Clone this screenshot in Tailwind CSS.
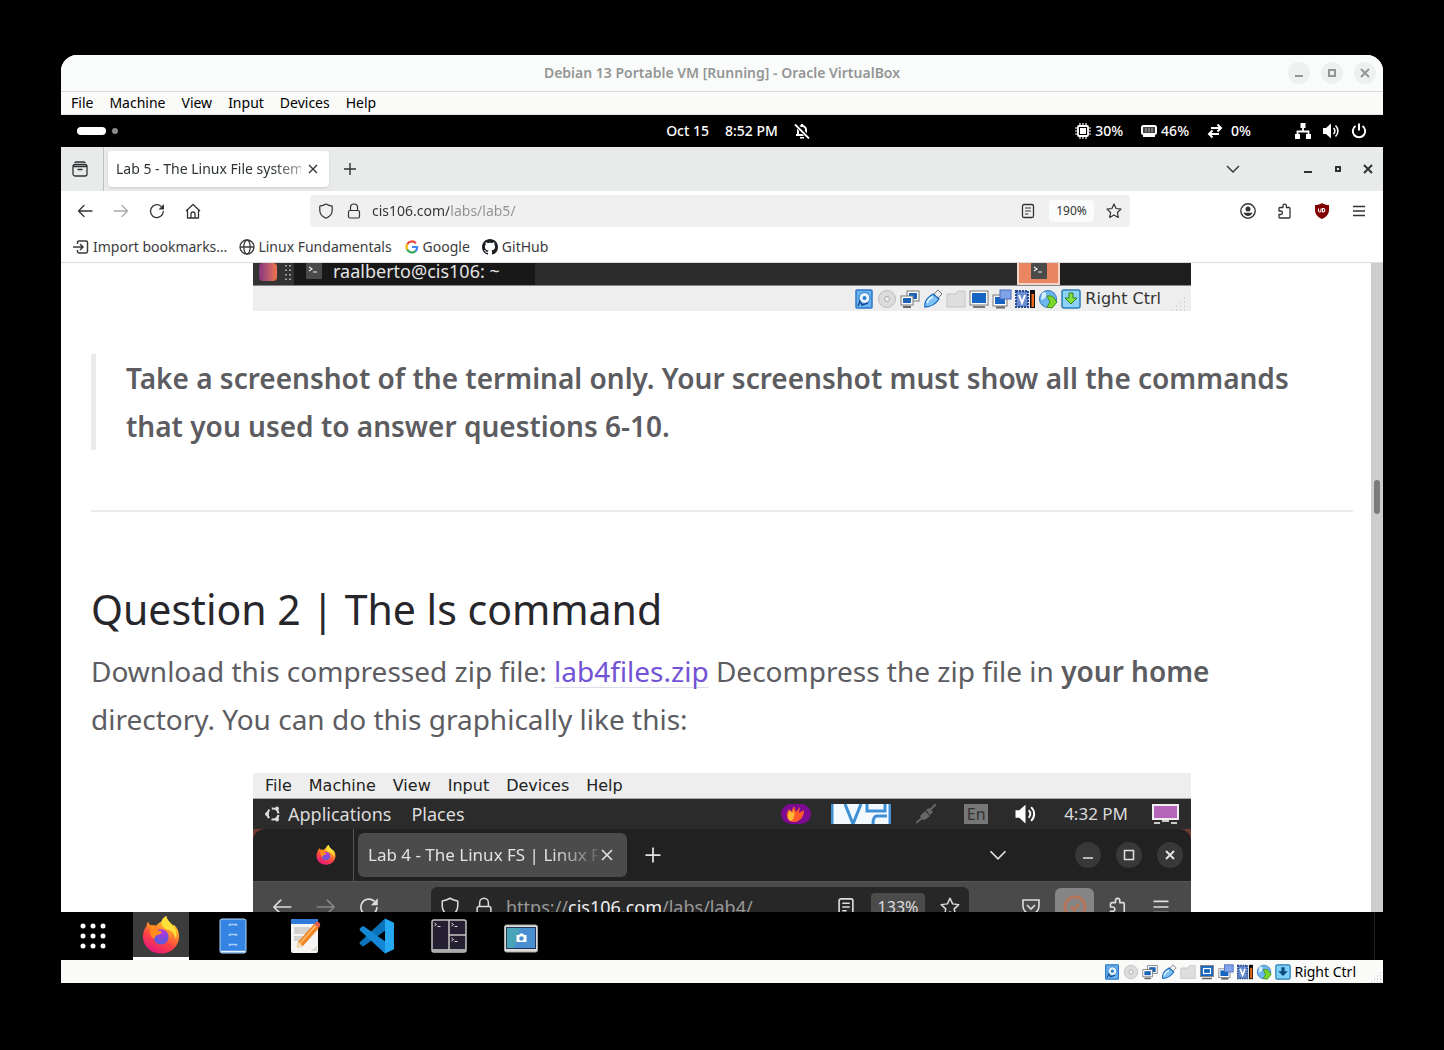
<!DOCTYPE html>
<html lang="en">
  <head>
    <meta charset="UTF-8" />
    <meta name="viewport" content="width=device-width, initial-scale=1.0" />
    <title>Debian 13 Portable VM [Running] - Oracle VirtualBox</title>
    <script src="https://cdn.jsdelivr.net/npm/@tailwindcss/browser@4"></script>
  </head>
  <body class="bg-black font-['Noto_Sans',sans-serif] text-sm">
    <!-- Shared icons -->
    <svg class="absolute size-0">
      <defs>
        <linearGradient id="ffBody" x1="0.8" y1="0" x2="0.3" y2="1">
          <stop offset="0" stop-color="#ffe847" />
          <stop offset="0.35" stop-color="#ff9a2b" />
          <stop offset="0.65" stop-color="#ff4343" />
          <stop offset="1" stop-color="#e3167f" />
        </linearGradient>
        <radialGradient id="ffGlobe" cx="0.6" cy="0.2" r="0.9">
          <stop offset="0" stop-color="#b833e1" />
          <stop offset="0.5" stop-color="#7a4ed8" />
          <stop offset="1" stop-color="#4a63e6" />
        </radialGradient>
      </defs>
      <symbol id="firefox" viewBox="0 0 40 40">
        <path d="M20 39.500C9 39.500 1 31.500 1 21.500c0-5 2-8.500 3.800-11 0-2 .7-3.500 1.700-4.500.5 2 1.500 3 3 3.800 2-.3 4-.1 5.500.4C16.500 8 18.500 6.500 20.500 6 21 3.500 23 1.500 25.500 0c1 5 4.500 7 7.500 10.500l.5-1.500c4 3.500 5.500 8 5.500 12.500C39 31.500 31 39.500 20 39.500z" fill="url(#ffBody)" />
        <path d="M25.500 0c1 5 4.500 7 7.500 10.500 3 3.500 4.500 8 2.500 13.500-1-5-4-8.500-8-9.500-4-1-7.500-4-7-8.500C21 3.500 23 1.500 25.500 0z" fill="#ffdf3a" />
        <circle cx="20" cy="22" r="8" fill="url(#ffGlobe)" />
        <path d="M5 10.500C8 9.500 12 9.500 15 10.200c-.5 2 0 4 2.500 5.300 1.500.7 3.500.5 3.500 1.500-.5 1.500-3 2.500-5 3-2 .7-3 2.500-3 4.500-4-3-5-7-4-10z" fill="#ff8a1e" />
      </symbol>
      <symbol id="hdd" viewBox="0 0 20 20">
        <rect x="2" y="1" width="16" height="18" rx="1" fill="#6cb4f0" stroke="#2b78c8" stroke-width="1.500" />
        <circle cx="10.500" cy="9" r="5.500" fill="#e9f5ff" stroke="#2474c4" />
        <circle cx="10.500" cy="9" r="2" fill="#2f7fd0" />
        <path d="M4 17l2-5 2 4 6-2" fill="none" stroke="#174f95" stroke-width="1.500" />
      </symbol>
      <symbol id="disc" viewBox="0 0 20 20">
        <circle cx="10" cy="10" r="8.500" fill="#dcdcdc" stroke="#bcbcbc" />
        <circle cx="10" cy="10" r="2.500" fill="#f3f3f3" stroke="#aaa" />
      </symbol>
      <symbol id="net" viewBox="0 0 20 20">
        <rect x="7" y="2" width="12" height="10" fill="#fff" stroke="#777" />
        <rect x="9" y="4" width="8" height="6" fill="#1c63b7" />
        <rect x="1" y="7" width="12" height="9" fill="#fff" stroke="#777" />
        <rect x="3" y="9" width="8" height="5" fill="#1c63b7" />
        <path d="M3 18h8" stroke="#666" stroke-width="2" />
      </symbol>
      <symbol id="usb" viewBox="0 0 20 20">
        <path d="M11 5l4-4 4 4-4 4z" fill="#eee" stroke="#777" />
        <path d="M2 18c-1-5 3-10 8-13l6 5c-4 6-9 8-14 8z" fill="#7cc2f5" stroke="#1d6dbd" stroke-width="1.300" />
        <path d="M4 14c1-3 3-5 6-6" fill="none" stroke="#d9f0ff" stroke-width="2" />
      </symbol>
      <symbol id="folder" viewBox="0 0 20 20">
        <path d="M1 18V5h9l2-3h7v16z" fill="#dedede" stroke="#c4c4c4" />
      </symbol>
      <symbol id="monitor" viewBox="0 0 20 20">
        <rect x="1" y="2" width="18" height="14" fill="#fff" stroke="#777" />
        <rect x="3" y="4" width="14" height="10" fill="#1765c2" />
        <path d="M4 18h12" stroke="#777" stroke-width="2" />
      </symbol>
      <symbol id="windows" viewBox="0 0 20 20">
        <rect x="1" y="6" width="14" height="11" fill="#fff" stroke="#777" />
        <rect x="3" y="8" width="10" height="7" fill="#1765c2" />
        <rect x="8" y="1" width="11" height="9" fill="#7fa4ea" stroke="#4e68b8" />
        <path d="M4 18.500h9" stroke="#666" stroke-width="2" />
      </symbol>
      <symbol id="cpuv" viewBox="0 0 20 20">
        <rect x="1" y="2" width="12" height="16" fill="#6b8ed0" stroke="#26488f" stroke-width="2" stroke-dasharray="2 1" />
        <path d="M4 6l3 8 3-8" fill="none" stroke="#fff" stroke-width="2" />
        <rect x="15" y="1" width="5" height="18" fill="#111" />
        <rect x="16.500" y="5" width="2.500" height="13" fill="#f26a1b" />
      </symbol>
      <symbol id="globe" viewBox="0 0 20 20">
        <circle cx="10" cy="10" r="8.500" fill="#6fb5ee" stroke="#2f7cc0" />
        <path d="M4 4c3-2 5 0 4 3s-3 3-5 4z" fill="#d6efff" />
        <path d="M9 7h5l5 6-5 6-5-1 3-5z" fill="#7cd62c" stroke="#3f8f17" />
      </symbol>
      <symbol id="down" viewBox="0 0 20 20">
        <rect x="1" y="1" width="18" height="18" rx="2" fill="#7fd0f7" stroke="#2b7db8" stroke-width="1.500" />
        <path d="M8 4h4v5h4l-6 6-6-6h4z" fill="#0d4a80" />
      </symbol>
      <symbol id="downGreen" viewBox="0 0 20 20">
        <rect x="1" y="1" width="18" height="18" rx="2" fill="#8fd2f8" stroke="#2b7db8" stroke-width="1.500" />
        <path d="M8 4h4v5h4l-6 6-6-6h4z" fill="#86e03a" stroke="#2f7f22" />
      </symbol>
      <symbol id="shield" viewBox="0 0 16 16">
        <path d="M8 1c2 1.200 4 1.900 6.200 2.200v4C14.200 11 11.500 13.800 8 15.200 4.500 13.800 1.800 11 1.800 7.200v-4C4 2.900 6 2.200 8 1z" fill="none" stroke="currentColor" stroke-width="1.200" stroke-linejoin="round" />
      </symbol>
      <symbol id="lock" viewBox="0 0 16 16">
        <rect x="2.500" y="7.500" width="11" height="7.500" rx="1.500" fill="none" stroke="currentColor" stroke-width="1.200" />
        <path d="M4.500 7.500V4.500a3.500 3.500 0 0 1 7 0v3" fill="none" stroke="currentColor" stroke-width="1.200" />
      </symbol>
      <symbol id="back" viewBox="0 0 16 16">
        <path d="M15 8H1.500M7 2.500L1.500 8 7 13.500" fill="none" stroke="currentColor" stroke-width="1.300" stroke-linecap="round" stroke-linejoin="round" />
      </symbol>
      <symbol id="forward" viewBox="0 0 16 16">
        <path d="M1 8h13.500M9 2.500L14.500 8 9 13.500" fill="none" stroke="currentColor" stroke-width="1.300" stroke-linecap="round" stroke-linejoin="round" />
      </symbol>
      <symbol id="reload" viewBox="0 0 16 16">
        <path d="M14.300 8.500A6.400 6.400 0 1 1 12 3.200" fill="none" stroke="currentColor" stroke-width="1.300" stroke-linecap="round" />
        <path d="M15 1v5.500H9.500z" fill="currentColor" />
      </symbol>
      <symbol id="reader" viewBox="0 0 16 16">
        <rect x="2.500" y="1.500" width="11" height="13" rx="1.500" fill="none" stroke="currentColor" stroke-width="1.300" />
        <path d="M5 5h6M5 8h6M5 11h3.500" stroke="currentColor" stroke-width="1.200" />
      </symbol>
      <symbol id="star" viewBox="0 0 16 16">
        <path d="M8 1l2.100 4.500 4.900.6-3.600 3.400.9 4.900L8 12l-4.300 2.400.9-4.900L1 6.100l4.900-.6z" fill="none" stroke="currentColor" stroke-width="1.200" stroke-linejoin="round" />
      </symbol>
      <symbol id="puzzle" viewBox="0 0 16 16">
        <path d="M2 8V5.500a1 1 0 0 1 1-1h3V2.800a1.700 1.700 0 0 1 3.400 0v1.700H12a1 1 0 0 1 1 1V14a1 1 0 0 1-1 1H3a1 1 0 0 1-1-1v-2.500h1.700a1.700 1.700 0 0 0 0-3.500z" fill="none" stroke="currentColor" stroke-width="1.300" stroke-linejoin="round" />
      </symbol>
      <symbol id="menu" viewBox="0 0 16 16">
        <path d="M2 3.500h12M2 8h12M2 12.500h12" stroke="currentColor" stroke-width="1.300" />
      </symbol>
      <symbol id="plus" viewBox="0 0 16 16">
        <path d="M8 2v12M2 8h12" stroke="currentColor" stroke-width="1.400" />
      </symbol>
      <symbol id="close" viewBox="0 0 16 16">
        <path d="M4 4l8 8M12 4l-8 8" stroke="currentColor" stroke-width="2" />
      </symbol>
      <symbol id="closeThin" viewBox="0 0 16 16">
        <path d="M4 4l8 8M12 4l-8 8" stroke="currentColor" stroke-width="1.300" />
      </symbol>
      <symbol id="chevron" viewBox="0 0 16 16">
        <path d="M2 5l6 6 6-6" fill="none" stroke="currentColor" stroke-width="1.400" />
      </symbol>
      <symbol id="volume" viewBox="0 0 16 16">
        <path d="M0 5h3l5-4.500v15L3 11H0z" fill="currentColor" />
        <path d="M10.500 5a4 4 0 0 1 0 6M12.500 2.500a7.500 7.500 0 0 1 0 11" fill="none" stroke="currentColor" stroke-width="1.600" />
      </symbol>
      <symbol id="term" viewBox="0 0 16 16">
        <rect width="16" height="16" rx="1" fill="#4a4a4a" />
        <path d="M3 4l3 2-3 2M7 9h4" fill="none" stroke="#eee" stroke-width="1.200" />
      </symbol>
    </svg>

    <div class="flex h-screen flex-col px-[61px] pt-[55px] pb-[67px]">
      <!-- VirtualBox window -->
      <div class="flex min-h-0 flex-1 flex-col overflow-hidden rounded-t-2xl bg-white">
        <header class="grid h-[37px] shrink-0 grid-cols-[1fr_auto_1fr] items-center border-b border-[#d8dbda] bg-[#fafcfb] px-[7px]">
          <h1 class="col-start-2 text-sm font-semibold text-[#949695]">Debian 13 Portable VM [Running] - Oracle VirtualBox</h1>
          <div class="flex justify-end gap-[11px] text-[#949695]">
            <button class="flex size-[22px] items-center justify-center rounded-full bg-[#eff1f0]" aria-label="Minimize"><svg class="size-4" viewBox="0 0 16 16"><path d="M4 11h8" stroke="currentColor" stroke-width="2" /></svg></button>
            <button class="flex size-[22px] items-center justify-center rounded-full bg-[#eff1f0]" aria-label="Maximize"><svg class="size-4" viewBox="0 0 16 16"><rect x="5" y="5" width="6" height="6" fill="none" stroke="currentColor" stroke-width="2" /></svg></button>
            <button class="flex size-[22px] items-center justify-center rounded-full bg-[#eff1f0]" aria-label="Close"><svg class="size-4"><use href="#close" /></svg></button>
          </div>
        </header>
        <nav class="flex h-[23px] shrink-0 items-center gap-4 border-b border-[#e4e4e2] bg-[#fafaf9] px-[10px] text-black">
          <button>File</button>
          <button>Machine</button>
          <button>View</button>
          <button>Input</button>
          <button>Devices</button>
          <button>Help</button>
        </nav>

        <!-- GNOME top bar -->
        <div class="grid h-8 shrink-0 grid-cols-[1fr_auto_1fr] items-center bg-black px-4 text-sm font-medium text-white">
          <div class="flex items-center gap-[6px]">
            <span class="h-2 w-[29px] rounded-full bg-white"></span>
            <span class="size-[6px] rounded-full bg-[#8a8a8a]"></span>
          </div>
          <div class="flex items-center gap-4 pl-8">
            <span>Oct 15</span>
            <span>8:52 PM</span>
            <svg class="size-4" viewBox="0 0 16 16"><path d="M4 12V7a4 4 0 0 1 8 0v5M2 12h12" fill="none" stroke="#fff" stroke-width="2" /><path d="M6 14h4v1.500H6zM7 1h2v2H7z" fill="#fff" /><path d="M1 1l14 14" stroke="#000" stroke-width="4" /><path d="M1 1.500l14 14" stroke="#fff" stroke-width="1.800" /></svg>
          </div>
          <div class="flex items-center justify-end">
            <svg class="mr-1 size-4" viewBox="0 0 16 16"><rect x="3" y="3" width="10" height="10" rx="1" fill="none" stroke="#fff" stroke-width="1.800" /><rect x="5" y="5" width="6" height="6" fill="#fff" /><path d="M5 0v3M8 0v3M11 0v3M5 13v3M8 13v3M11 13v3M0 5h3M0 8h3M0 11h3M13 5h3M13 8h3M13 11h3" stroke="#fff" stroke-width="1.200" /></svg>
            <span>30%</span>
            <svg class="mr-1 ml-[18px] size-4" viewBox="0 0 16 16"><rect x="1" y="3" width="14" height="8" rx="1.500" fill="#444" stroke="#fff" stroke-width="2" /><path d="M5 5v4M8 5v4M11 5v4" stroke="#aaa" /><path d="M2 11h12v3H2z" fill="#fff" /></svg>
            <span>46%</span>
            <svg class="mr-2 ml-[18px] size-4" viewBox="0 0 16 16"><path d="M4 5h10M10.500 1.500L14 5l-3.500 3.500M12 11H2M5.500 7.500L2 11l3.500 3.500" fill="none" stroke="#fff" stroke-width="2" /></svg>
            <span>0%</span>
            <svg class="ml-11 size-4" viewBox="0 0 16 16"><path d="M5.500 0h5v5h-5zM0 11h5v5H0zM11 11h5v5h-5z" fill="#fff" /><path d="M8 5v4M2.500 11V8.500h11V11" fill="none" stroke="#fff" stroke-width="1.800" /></svg>
            <svg class="ml-3 size-4"><use href="#volume" /></svg>
            <svg class="ml-3 size-4" viewBox="0 0 16 16"><path d="M4.500 3a6.200 6.200 0 1 0 7 0M8 .5v7" fill="none" stroke="#fff" stroke-width="2" /></svg>
          </div>
        </div>

        <!-- Firefox tab strip -->
        <div class="flex h-11 shrink-0 items-center bg-[#e9ebea] pr-[7px] text-[#2e3436]">
          <button class="flex h-full w-[43px] items-center justify-center border-r border-[#bfc1c0] pr-1" aria-label="Recent browsing"><svg class="size-4" viewBox="0 0 16 16"><path d="M1 5.500h14v7.500a2 2 0 0 1-2 2H3a2 2 0 0 1-2-2zM3 1.500c.3-.4.700-.5 1-.5h8c.3 0 .7.100 1 .5M1 5.500c0-1 .9-2 2-2h10c1.100 0 2 1 2 2M6 8.500h4" fill="none" stroke="currentColor" stroke-width="1.300" stroke-linecap="round" /></svg></button>
          <div class="ml-1 flex h-9 w-[221px] items-center rounded bg-white pr-2 pl-2 shadow">
            <span class="flex-1 overflow-hidden whitespace-nowrap [mask-image:linear-gradient(90deg,#000_85%,#0006)]">Lab 5 - The Linux File system</span>
            <button class="ml-1" aria-label="Close tab"><svg class="size-4"><use href="#closeThin" /></svg></button>
          </div>
          <button class="ml-[13px]" aria-label="New tab"><svg class="size-4"><use href="#plus" /></svg></button>
          <button class="ml-auto" aria-label="List all tabs"><svg class="size-4"><use href="#chevron" /></svg></button>
          <div class="ml-[59px] flex gap-[14px]">
            <button aria-label="Minimize"><svg class="size-4" viewBox="0 0 16 16"><path d="M4 11h8" stroke="currentColor" stroke-width="2" /></svg></button>
            <button aria-label="Restore"><svg class="size-4" viewBox="0 0 16 16"><rect x="6" y="6" width="4" height="4" fill="none" stroke="currentColor" stroke-width="2" /></svg></button>
            <button aria-label="Close"><svg class="size-4"><use href="#close" /></svg></button>
          </div>
        </div>

        <!-- Navigation bar -->
        <div class="flex h-10 shrink-0 items-center bg-white text-[#333]">
          <div class="flex w-[249px] gap-5 pl-4">
            <button aria-label="Back"><svg class="size-4"><use href="#back" /></svg></button>
            <button class="text-[#aaa]" aria-label="Forward"><svg class="size-4"><use href="#forward" /></svg></button>
            <button aria-label="Reload"><svg class="size-4"><use href="#reload" /></svg></button>
            <button aria-label="Home"><svg class="size-4" viewBox="0 0 16 16"><path d="M1 8l7-6.500L15 8M2.500 7v8h11V7M6 15v-4a2 2 0 0 1 4 0v4" fill="none" stroke="currentColor" stroke-width="1.300" stroke-linejoin="round" /></svg></button>
          </div>
          <div class="flex h-8 flex-1 items-center rounded bg-[#f0f0f0] px-2">
            <svg class="size-4"><use href="#shield" /></svg>
            <svg class="ml-3 size-4"><use href="#lock" /></svg>
            <input class="ml-[10px] min-w-0 flex-1 bg-[linear-gradient(90deg,#333_77px,#909090_77px)] bg-clip-text text-transparent outline-none" type="text" value="cis106.com/labs/lab5/" aria-label="Address" />
            <button aria-label="Reader view"><svg class="size-4"><use href="#reader" /></svg></button>
            <button class="ml-[13px] h-[22px] w-[45px] rounded bg-[#fafcfb] text-xs">190%</button>
            <button class="ml-3" aria-label="Bookmark"><svg class="size-4"><use href="#star" /></svg></button>
          </div>
          <div class="flex w-[253px] justify-end gap-[21px] pr-4">
            <button aria-label="Account"><svg class="size-4" viewBox="0 0 16 16"><circle cx="8" cy="8" r="7.200" fill="none" stroke="currentColor" stroke-width="1.400" /><circle cx="8" cy="6" r="2.500" fill="currentColor" /><path d="M3.500 9.800h9c-.5 2-2.500 3.200-4.500 3.200s-4-1.200-4.500-3.200z" fill="currentColor" /></svg></button>
            <button aria-label="Extensions"><svg class="size-4"><use href="#puzzle" /></svg></button>
            <button aria-label="uBlock Origin"><svg class="size-4" viewBox="0 0 16 16"><path d="M8 0c2 1.500 4.500 2 7 2v5c0 4.500-3 7-7 9-4-2-7-4.500-7-9V2c2.500 0 5-.5 7-2z" fill="#800000" /><path d="M4.500 5.500v2.300c0 1.500 2.500 1.500 2.500 0V5.500M8.500 5.500v3.500h1a1.800 1.800 0 0 0 0-3.500z" fill="none" stroke="#fff" stroke-width="1.100" /></svg></button>
            <button aria-label="Menu"><svg class="size-4"><use href="#menu" /></svg></button>
          </div>
        </div>

        <!-- Bookmarks -->
        <nav class="flex h-8 shrink-0 items-center gap-3 border-b border-[#dcdcdc] bg-white px-3 text-[#3b3b3d]">
          <a href="#" class="flex items-center gap-1"><svg class="size-4" viewBox="0 0 16 16"><path d="M4.500 5V3.500a1.500 1.500 0 0 1 1.500-1.500h7a1.500 1.500 0 0 1 1.500 1.500v9a1.500 1.500 0 0 1-1.500 1.500H6a1.500 1.500 0 0 1-1.500-1.500V11M0 8h10M7 5l3 3-3 3" fill="none" stroke="currentColor" stroke-width="1.500" /></svg>Import bookmarks…</a>
          <a href="#" class="flex items-center gap-[3px]"><svg class="size-4" viewBox="0 0 16 16"><circle cx="8" cy="8" r="7" fill="none" stroke="currentColor" stroke-width="1.300" /><ellipse cx="8" cy="8" rx="3.200" ry="7" fill="none" stroke="currentColor" stroke-width="1.300" /><path d="M1 8h14" stroke="currentColor" stroke-width="1.300" /></svg>Linux Fundamentals</a>
          <a href="#" class="flex items-center gap-[3px]"><svg class="size-4" viewBox="0 0 16 16"><g fill="none" stroke-width="2.200"><path d="M3.200 5.200A5.300 5.300 0 0 1 11.800 4.200" stroke="#ea4335" /><path d="M3.200 5.200a5.400 5.400 0 0 0 0 5.400" stroke="#fbbc05" /><path d="M3.200 10.600a5.300 5.300 0 0 0 8.300 1.500" stroke="#34a853" /><path d="M8 8h5.200c0 1.800-.6 3.100-1.700 4.100" stroke="#4285f4" /></g></svg>Google</a>
          <a href="#" class="flex items-center gap-1"><svg class="size-4" viewBox="0 0 16 16"><path d="M8 0C3.580 0 0 3.580 0 8c0 3.540 2.290 6.530 5.470 7.590.4.070.55-.17.55-.38 0-.19-.01-.82-.01-1.490-2.010.37-2.530-.49-2.690-.94-.09-.23-.48-.94-.82-1.130-.28-.15-.68-.52-.01-.53.63-.01 1.080.58 1.230.82.72 1.210 1.870.87 2.330.66.07-.52.28-.87.51-1.070-1.780-.2-3.640-.89-3.640-3.950 0-.87.31-1.590.82-2.150-.08-.2-.36-1.020.08-2.120 0 0 .67-.21 2.200.82.64-.18 1.320-.27 2-.27s1.360.09 2 .27c1.530-1.040 2.200-.82 2.200-.82.44 1.100.16 1.920.08 2.120.51.56.82 1.270.82 2.150 0 3.070-1.870 3.750-3.650 3.950.29.25.54.73.54 1.480 0 1.070-.01 1.930-.01 2.200 0 .21.15.46.55.38A8.010 8.010 0 0 0 16 8c0-4.420-3.580-8-8-8z" fill="#1b1f23" /></svg>GitHub</a>
        </nav>

        <!-- Page -->
        <div class="flex min-h-0 flex-1 overflow-hidden">
          <main class="min-w-0 flex-1 pr-[18px] pl-[30px] text-[28px] leading-[48px] text-[#5c5c61]">
            <!-- Lower edge of the previous screenshot -->
            <figure class="mx-auto max-w-[938px] bg-[#eee]">
              <div class="flex h-[23px] items-center overflow-hidden border-b border-[#888] bg-[#2b2b2b] text-lg leading-6 text-[#e4e4e4]">
                <span class="flex h-full w-[41px] items-center gap-2 bg-[#333] pl-[6px]">
                  <span class="-mt-1 size-[18px] rounded-sm bg-linear-to-r from-[#87357f] to-[#ee7346]"></span>
                  <svg class="h-[18px] w-[6px]" viewBox="0 0 6 18"><path d="M1 0v18M5 0v18" stroke="#ccc" stroke-width="1.500" stroke-dasharray="1.500 3" /></svg>
                </span>
                <span class="flex h-full w-[241px] items-center gap-[11px] bg-[#181818] pb-[6px] pl-3"><svg class="size-4"><use href="#term" /></svg>raalberto@cis106: ~</span>
                <span class="ml-auto flex h-full w-[174px] bg-[#1e1e1e]">
                  <span class="flex h-full w-[43px] justify-center border-2 border-t-0 border-[#f5d5c8] bg-[#e98560]"><svg class="size-4"><use href="#term" /></svg></span>
                </span>
              </div>
              <div class="flex h-[25px] items-center justify-end gap-[3px] pr-[3px] font-['DejaVu_Sans',sans-serif] text-base text-[#333]">
                <svg class="size-5"><use href="#hdd" /></svg>
                <svg class="size-5"><use href="#disc" /></svg>
                <svg class="size-5"><use href="#net" /></svg>
                <svg class="size-5"><use href="#usb" /></svg>
                <svg class="size-5"><use href="#folder" /></svg>
                <svg class="size-5"><use href="#monitor" /></svg>
                <svg class="size-5"><use href="#windows" /></svg>
                <svg class="size-5"><use href="#cpuv" /></svg>
                <svg class="size-5"><use href="#globe" /></svg>
                <svg class="size-5"><use href="#downGreen" /></svg>
                <span class="pl-[1px]">Right Ctrl</span>
                <svg class="mt-2 ml-2 size-4" viewBox="0 0 16 16"><path d="M12 3h1M8 7h1M12 7h1M4 11h1M8 11h1M12 11h1M0 15h1M4 15h1M8 15h1M12 15h1" stroke="#bbb" stroke-width="1" /></svg>
              </div>
            </figure>

            <blockquote class="mt-[43px] border-l-[5px] border-[#ebebeb] pl-[30px] font-semibold">Take a screenshot of the terminal only. Your screenshot must show all the commands<br />that you used to answer questions 6-10.</blockquote>
            <hr class="mt-[60px] border-t-2 border-[#ebebeb]" />
            <h2 class="mt-[66px] text-[41px] leading-[62px] text-[#27262b]">Question 2 | The ls command</h2>
            <p class="mt-[7px]">Download this compressed zip file: <a href="#" class="text-[#7253d6] underline decoration-[#dedcea] decoration-1 underline-offset-[5px]">lab4files.zip</a> Decompress the zip file in <strong class="font-semibold">your home</strong><br />directory. You can do this graphically like this:</p>

            <!-- Screenshot of an Ubuntu machine -->
            <figure class="mx-auto mt-[30px] max-w-[938px] bg-[#4a4a4a] leading-6">
              <div class="flex h-[26px] items-center gap-[17px] border-b border-[#aaa] bg-[#eee] px-3 font-['DejaVu_Sans',sans-serif] text-base text-[#222]">
                <span>File</span><span>Machine</span><span>View</span><span>Input</span><span>Devices</span><span>Help</span>
              </div>
              <div class="flex h-[30px] items-center bg-[#2b2b2b] px-3 text-lg text-[#dcdcdc]">
                <svg class="mr-[7px] size-4" viewBox="0 0 16 16"><circle cx="8" cy="8" r="5.500" fill="none" stroke="currentColor" stroke-width="2.200" stroke-dasharray="9 2.500" stroke-dashoffset="-1" /><circle cx="2" cy="8" r="2" fill="currentColor" /><circle cx="12" cy="2.500" r="2" fill="currentColor" /><circle cx="12" cy="13.500" r="2" fill="currentColor" /></svg>
                <span>Applications</span>
                <span class="ml-5">Places</span>
                <svg class="ml-auto h-5 w-[30px]" viewBox="0 0 30 20"><rect width="30" height="20" rx="10" fill="#7d0a92" /><path d="M6 13c-1-4 1-6 2-8l2 3 3-6 2 6 4-5-1 6 5-3c0 6-3 11-9 12-4 0-7-1-8-5z" fill="#ff5a2a" /><path d="M7 13c0-4 1-5 2-7l2 3 2-3c1 5 0 9-3 11-2-1-3-2-3-4z" fill="#ffba36" /></svg>
                <svg class="ml-5 h-5 w-[60px]" viewBox="0 0 60 20"><rect width="60" height="20" fill="#f2f9ff" /><path d="M1 0v20M59 0v20M14 0l8 20 8-20M36 0v7h12M54 0v7h-8M56 12H46c-3 0-4 3-4 8" fill="none" stroke="#3f8fd4" stroke-width="3" /></svg>
                <svg class="ml-[25px] size-5" viewBox="0 0 20 20"><path d="M0 19l6-5M14 6l6-6" stroke="#666" stroke-width="2" /><path d="M4 12l5-5 5 5-4 3c-3 2-4 1-6-3zM10 6l3-2 4 4-3 3z" fill="#666" /></svg>
                <span class="ml-7 flex h-5 w-6 items-center justify-center bg-[#777] text-base text-[#333]">En</span>
                <svg class="ml-6 h-5 w-[27px] text-white"><use href="#volume" /></svg>
                <span class="ml-[25px] text-[17px]">4:32 PM</span>
                <svg class="ml-6 h-5 w-[27px]" viewBox="0 0 27 20"><rect x="1" y="1" width="25" height="14" fill="#b565b8" stroke="#eee" stroke-width="2" /><path d="M10 17h7M2 19h6M19 19h6" stroke="#ccc" stroke-width="2" /></svg>
              </div>
              <div class="bg-[#6e3a2e]">
              <div class="flex h-[53px] items-center rounded-t-xl border-b border-[#555] bg-[#212121] pr-2 text-[17px] text-[#e2e2e2]">
                <span class="flex h-full w-[101px] items-center justify-end border-r border-[#555] pr-[17px]"><svg class="size-5"><use href="#firefox" /></svg></span>
                <div class="ml-1 flex h-11 w-[269px] items-center rounded-md bg-[#4b4b4b] px-[10px]">
                  <span class="flex-1 overflow-hidden whitespace-nowrap [mask-image:linear-gradient(90deg,#000_80%,#0003)]">Lab 4 - The Linux FS | Linux Fu</span>
                  <svg class="size-5"><use href="#closeThin" /></svg>
                </div>
                <svg class="ml-4 size-5"><use href="#plus" /></svg>
                <svg class="mr-[67px] ml-auto size-5"><use href="#chevron" /></svg>
                <div class="flex gap-[15px]">
                  <span class="flex size-[26px] items-center justify-center rounded-full bg-[#383838]"><svg class="size-4" viewBox="0 0 16 16"><path d="M3 11h10" stroke="currentColor" stroke-width="1.500" /></svg></span>
                  <span class="flex size-[26px] items-center justify-center rounded-full bg-[#383838]"><svg class="size-4" viewBox="0 0 16 16"><rect x="3.500" y="3.500" width="9" height="9" fill="none" stroke="currentColor" stroke-width="1.500" /></svg></span>
                  <span class="flex size-[26px] items-center justify-center rounded-full bg-[#383838]"><svg class="size-4"><use href="#close" /></svg></span>
                </div>
              </div>
              </div>
              <div class="flex h-[50px] items-center pr-5 pl-[19px] text-lg text-[#ddd]">
                <svg class="size-5"><use href="#back" /></svg>
                <svg class="ml-6 size-5 text-[#888]"><use href="#forward" /></svg>
                <svg class="ml-[23px] size-5"><use href="#reload" /></svg>
                <div class="ml-[52px] flex h-10 flex-1 items-center rounded-md bg-[#272727] px-[9px]">
                  <svg class="size-5"><use href="#shield" /></svg>
                  <svg class="ml-[14px] size-5"><use href="#lock" /></svg>
                  <span class="ml-3 flex-1 text-[#999]">https://<span class="text-[#eee]">cis106.com</span>/labs/lab4/</span>
                  <svg class="size-5"><use href="#reader" /></svg>
                  <span class="ml-[15px] flex h-7 w-[54px] items-center justify-center rounded bg-[#4b4b4b] text-base">133%</span>
                  <svg class="ml-[15px] size-5"><use href="#star" /></svg>
                </div>
                <svg class="ml-[52px] size-5" viewBox="0 0 20 20"><path d="M2 3h16v6a8 8 0 0 1-16 0zM6 8l4 4 4-4" fill="none" stroke="currentColor" stroke-width="1.600" /></svg>
                <span class="mx-[14px] flex size-[39px] items-center justify-center rounded-md bg-[#858585]"><svg class="size-6" viewBox="0 0 24 24"><circle cx="12" cy="12" r="10" fill="none" stroke="#b4755a" stroke-width="3" /><path d="M8 12l3 3 5-6" fill="none" stroke="#b4755a" stroke-width="3" /></svg></span>
                <svg class="size-5"><use href="#puzzle" /></svg>
                <svg class="ml-[23px] size-5"><use href="#menu" /></svg>
              </div>
            </figure>
          </main>
          <div class="w-3 shrink-0 bg-[#cdcdcd] px-[3px] pt-[217px]">
            <div class="h-[34px] w-[6px] rounded-full bg-[#7b7d7c]"></div>
          </div>
        </div>

        <!-- Dock -->
        <div class="flex h-12 shrink-0 bg-black pr-2">
          <div class="flex flex-1 gap-4 border-r border-[#222] pl-1">
            <button class="mr-[-4px] flex w-14 items-center justify-center" aria-label="Show apps"><svg class="size-[26px]" viewBox="0 0 26 26" fill="#fff"><circle cx="3" cy="3" r="2.500" /><circle cx="13" cy="3" r="2.500" /><circle cx="23" cy="3" r="2.500" /><circle cx="3" cy="13" r="2.500" /><circle cx="13" cy="13" r="2.500" /><circle cx="23" cy="13" r="2.500" /><circle cx="3" cy="23" r="2.500" /><circle cx="13" cy="23" r="2.500" /><circle cx="23" cy="23" r="2.500" /></svg></button>
            <button class="flex w-14 items-center justify-center border-b-[3px] border-white bg-[#3c3c3c]" aria-label="Firefox"><svg class="size-[38px]"><use href="#firefox" /></svg></button>
            <button class="flex w-14 items-center justify-center" aria-label="Files"><svg class="size-9" viewBox="0 0 36 36"><rect x="5" y="1" width="26" height="34" rx="2" fill="#3584e4" stroke="#b5d8f5" /><path d="M6 33.500h24" stroke="#e8f3fd" stroke-width="1.500" /><path d="M14.500 8V6.500h7V8M14.500 18v-1.500h7V18M14.500 28v-1.500h7V28" fill="none" stroke="#a9cdf5" stroke-width="1.500" /></svg></button>
            <button class="flex w-14 items-center justify-center" aria-label="Text editor"><svg class="size-9" viewBox="0 0 36 36"><rect x="4" y="1" width="27" height="34" rx="2" fill="#f6f5f4" /><path d="M4 6V3a2 2 0 0 1 2-2h23a2 2 0 0 1 2 2v3z" fill="#2f7dd8" /><path d="M7 9h16v7H7zM7 18h14v5H7z" fill="#d5d3d0" /><path d="M24 33l6-5v5z" fill="#d9d7d4" /><path d="M11 24l16-18 5 4-16 18-6 2z" fill="#f08523" /><path d="M28.500 8l-16 18" stroke="#ffbe6f" stroke-width="1.500" /><path d="M11 24l5 4-6 2z" fill="#f5dcb8" /><path d="M27 6l2-2c2-1 5 1 4 4l-1 2z" fill="#e05c50" /></svg></button>
            <button class="flex w-14 items-center justify-center" aria-label="Visual Studio Code"><svg class="size-9" viewBox="0 0 36 36"><path d="M26 .5l1 11.500L5 28c-1 .5-1.500.3-2 0l-2-2c-.6-.7-.6-1.500 0-2z" fill="#0a73bb" /><path d="M26 35.500l1-11.500L5 8.500c-1-.5-1.500-.3-2 0l-2 2c-.6.700-.6 1.500 0 2z" fill="#1488d6" /><path d="M26 .5l9 4.300v26.400L26 35.500z" fill="#27a8f2" /></svg></button>
            <button class="flex w-14 items-center justify-center" aria-label="Terminator"><svg class="size-9" viewBox="0 0 36 36"><rect x="1" y="2" width="34" height="32" rx="2" fill="#241f31" stroke="#c6c5c2" stroke-width="1.500" /><path d="M2 32.500h32" stroke="#aaa" stroke-width="3" /><path d="M18 2v30M18 17h17" stroke="#c6c5c2" stroke-width="1.500" /><path d="M3.500 5l2 1.500-2 1.500M6.500 8.500h3M20.500 5l2 1.500-2 1.500M23.500 8.500h3M20.500 20l2 1.500-2 1.500M23.500 23.500h3" fill="none" stroke="#ddd" /></svg></button>
            <button class="flex w-14 items-center justify-center" aria-label="Screenshot"><svg class="size-9" viewBox="0 0 36 36"><rect x="1.500" y="7" width="33" height="27" rx="2" fill="#deddda" stroke="#aaa" /><path d="M3 9h30v22H3z" fill="#26325a" /><path d="M4 10h28v20H4z" fill="#4a8fd0" /><path d="M4 10h13l-6 20H4z" fill="#48a5b8" /><path d="M13.500 17h2.500l1-1.500h3l1 1.500h2.500v7h-10z" fill="#fff" /><circle cx="18.500" cy="20.500" r="2.200" fill="#4a8fd0" /></svg></button>
          </div>
        </div>

        <!-- VirtualBox status bar -->
        <footer class="flex h-[23px] shrink-0 items-center justify-end gap-[3px] bg-[#fafaf9] text-black">
          <svg class="size-4"><use href="#hdd" /></svg>
          <svg class="size-4"><use href="#disc" /></svg>
          <svg class="size-4"><use href="#net" /></svg>
          <svg class="size-4"><use href="#usb" /></svg>
          <svg class="size-4"><use href="#folder" /></svg>
          <svg class="size-4" viewBox="0 0 16 16"><rect x="1.500" y="1.500" width="13" height="11" fill="#1765c2" stroke="#888" /><rect x="4.500" y="4.500" width="7" height="5" fill="#1765c2" stroke="#fff" stroke-width="1.200" /><path d="M3 14.500h10" stroke="#666" stroke-width="1.500" /></svg>
          <svg class="size-4"><use href="#windows" /></svg>
          <svg class="size-4"><use href="#cpuv" /></svg>
          <svg class="size-4"><use href="#globe" /></svg>
          <svg class="size-4"><use href="#down" /></svg>
          <span>Right Ctrl</span>
          <svg class="mt-3 ml-3 size-3" viewBox="0 0 12 12"><path d="M9 1h1M6 4h1M9 4h1M3 7h1M6 7h1M9 7h1M0 10h1M3 10h1M6 10h1M9 10h1" stroke="#bbb" /></svg>
        </footer>
      </div>
    </div>
  </body>
</html>
